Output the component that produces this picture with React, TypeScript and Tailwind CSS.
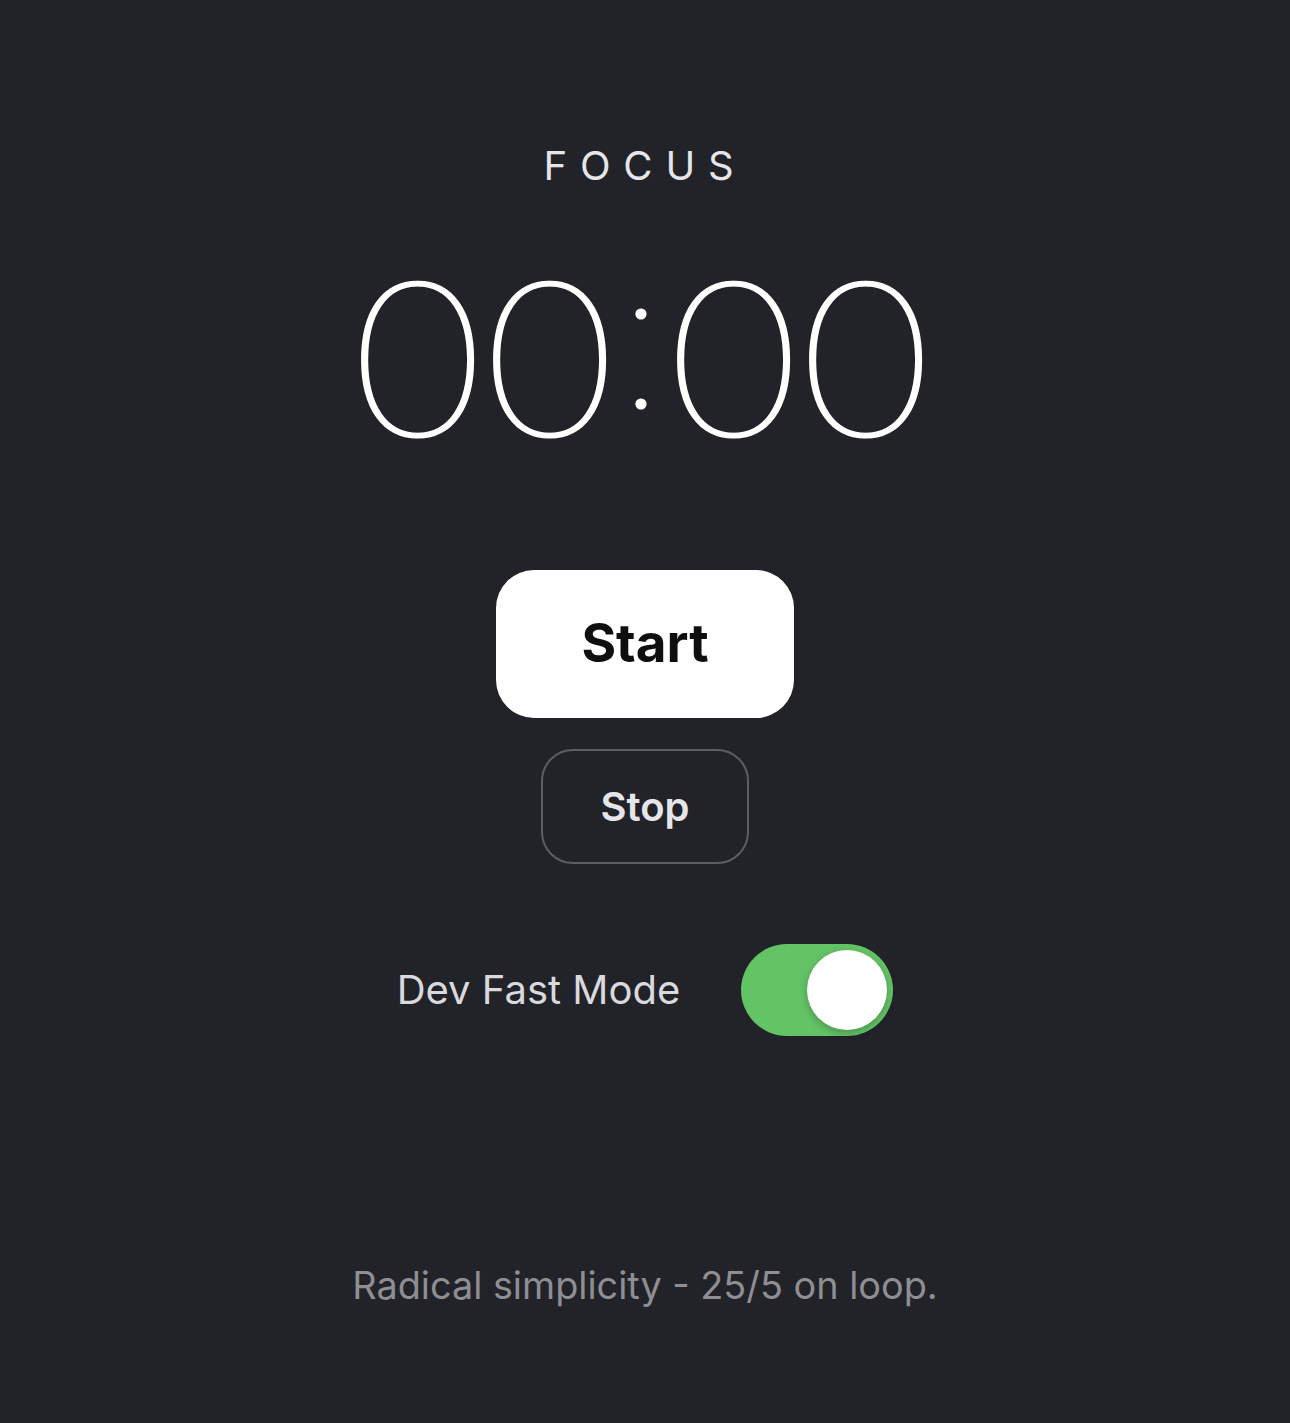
import { useState } from "react"

export default function App() {
  const [fast, setFast] = useState(true)

  return (
    <div className="min-h-screen w-full bg-[#212328] flex flex-col items-center font-['Inter',sans-serif] select-none">
      {/* Mode label */}
      <p className="mt-[142px] text-[40px] leading-[48px] font-normal tracking-[0.32em] text-[#e5e5ea]">
        FOCUS
      </p>

      {/* Timer */}
      <div className="mt-[80px] pr-[8px] flex items-baseline text-[210px] leading-[180px] font-thin text-white [-webkit-text-stroke:1.2px_white]">
        <span className="w-[111px] inline-flex justify-center scale-x-[1.19]">0</span>
        <span className="ml-[21px] w-[111px] inline-flex justify-center scale-x-[1.19]">0</span>
        <span className="mx-[16.5px] w-[40px] inline-flex justify-center text-[192px] -translate-y-[28px]">:</span>
        <span className="w-[111px] inline-flex justify-center scale-x-[1.19]">0</span>
        <span className="ml-[21px] w-[111px] inline-flex justify-center scale-x-[1.19]">0</span>
      </div>

      {/* Controls */}
      <button className="mt-[114px] w-[298px] h-[148px] rounded-[38px] bg-white text-[#0f0f10] text-[53px] font-bold">
        Start
      </button>
      <button className="mt-[31px] w-[208px] h-[115px] rounded-[32px] border-2 border-[#5b5e64] text-[#e5e5ea] text-[40px] font-semibold">
        Stop
      </button>

      {/* Dev toggle */}
      <div className="mt-[80px] flex items-center gap-[61px]">
        <span className="text-[40px] text-[#d9d9de]">Dev Fast Mode</span>
        <button
          onClick={() => setFast(!fast)}
          className={`w-[152px] h-[92px] rounded-full p-[6px] flex items-center ${
            fast ? "bg-[#63c466] justify-end" : "bg-[#3a3c42] justify-start"
          }`}
        >
          <span className="w-[80px] h-[80px] rounded-full bg-white shadow-[0_3px_8px_rgba(0,0,0,0.25)]" />
        </button>
      </div>

      {/* Footer */}
      <p className="mt-[221px] text-[37.8px] text-[#8e8e93]">Radical simplicity - 25/5 on loop.</p>
    </div>
  )
}
